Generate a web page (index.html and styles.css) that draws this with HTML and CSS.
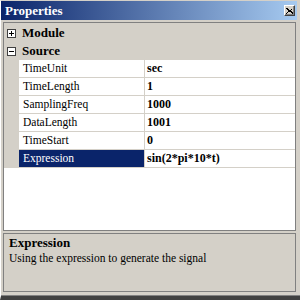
FILE: index.html
```html
<!DOCTYPE html>
<html>
<head>
<meta charset="utf-8">
<link rel="stylesheet" href="styles.css">
</head>
<body>
<div class="window">
  <div class="titlebar">
    <span class="title">Properties</span>
    <span class="close">
      <svg width="7" height="6" viewBox="0 0 7 6"><path d="M0.5 0.5 L6.5 5.5 M6.5 0.5 L0.5 5.5 M1.5 0.5 L7 5.5" stroke="#000" stroke-width="1" fill="none" shape-rendering="crispEdges"/></svg>
    </span>
  </div>
  <div class="grid">
    <div class="cat">
      <svg class="box" width="9" height="9" viewBox="0 0 9 9"><rect x="0.5" y="0.5" width="8" height="8" fill="#fff" stroke="#404040"/><path d="M2 4.5 H7 M4.5 2 V7" stroke="#000"/></svg>
      <span>Module</span>
    </div>
    <div class="cat">
      <svg class="box" width="9" height="9" viewBox="0 0 9 9"><rect x="0.5" y="0.5" width="8" height="8" fill="#fff" stroke="#404040"/><path d="M2 4.5 H7" stroke="#000"/></svg>
      <span>Source</span>
    </div>
    <div class="row"><div class="gut"></div><div class="name">TimeUnit</div><div class="val">sec</div></div>
    <div class="row"><div class="gut"></div><div class="name">TimeLength</div><div class="val">1</div></div>
    <div class="row"><div class="gut"></div><div class="name">SamplingFreq</div><div class="val">1000</div></div>
    <div class="row"><div class="gut"></div><div class="name">DataLength</div><div class="val">1001</div></div>
    <div class="row"><div class="gut"></div><div class="name">TimeStart</div><div class="val">0</div></div>
    <div class="row sel"><div class="gut"></div><div class="name">Expression</div><div class="val">sin(2*pi*10*t)</div></div>
  </div>
  <div class="desc">
    <div class="dtitle">Expression</div>
    <div class="dtext">Using the expression to generate the signal</div>
  </div>
</div>
</body>
</html>
```
FILE: styles.css
```css
html, body {
  margin: 0;
  padding: 0;
  background: #d4d0c8;
}
.window {
  width: 300px;
  height: 300px;
  box-sizing: border-box;
  background: #d4d0c8;
  border-top: 1px solid #d4d0c8;
  border-left: 1px solid #ffffff;
  border-bottom: 4px solid #404040;
  box-shadow: inset 0 -1px 0 #808080;
  display: flex;
  flex-direction: column;
  font-family: "Liberation Serif", "Times New Roman", serif;
  color: #000;
}
.titlebar {
  height: 19px;
  margin-right: 3px;
  background: linear-gradient(to right, #0a246a, #a6caf0);
  display: flex;
  align-items: center;
  justify-content: space-between;
  flex-shrink: 0;
}
.title {
  color: #fff;
  font-weight: bold;
  font-size: 13px;
  line-height: 19px;
  padding-left: 4px;
}
.close {
  width: 9px;
  height: 9px;
  margin-right: 2px;
  background: #d4d0c8;
  border-top: 1px solid #ffffff;
  border-left: 1px solid #ffffff;
  border-right: 1px solid #404040;
  border-bottom: 1px solid #404040;
  box-shadow: inset -1px -1px 0 #808080;
  display: flex;
  align-items: center;
  justify-content: center;
}
.close svg {
  display: block;
}
.grid {
  margin: 2px 4px 0 2px;
  height: 209px;
  box-sizing: border-box;
  border: 1px solid #808080;
  background: #ffffff;
  padding-top: 1px;
  box-shadow: inset 0 1px 0 #d4d0c8;
  flex-shrink: 0;
}
.cat {
  height: 18px;
  background: #d4d0c8;
  display: flex;
  align-items: center;
  gap: 6px;
  padding-left: 3px;
  font-weight: bold;
  font-size: 13px;
  line-height: 18px;
}
.box {
  display: block;
}
.row {
  display: grid;
  grid-template-columns: 15px 126px 1fr;
  height: 18px;
}
.gut {
  background: #d4d0c8;
}
.name {
  box-sizing: border-box;
  border-right: 1px solid #d4d0c8;
  border-bottom: 1px solid #d4d0c8;
  padding-left: 4px;
  font-size: 11.5px;
  line-height: 17px;
  white-space: nowrap;
}
.val {
  box-sizing: border-box;
  border-bottom: 1px solid #d4d0c8;
  padding-left: 2px;
  font-size: 12px;
  font-weight: bold;
  line-height: 17px;
  white-space: nowrap;
}
.sel .name {
  background: #0a246a;
  color: #ffffff;
}
.desc {
  margin: 2px 4px 0 2px;
  height: 59px;
  box-sizing: border-box;
  border: 1px solid #808080;
  padding: 1px 5px 0 5px;
  flex-shrink: 0;
}
.dtitle {
  font-weight: bold;
  font-size: 13px;
  line-height: 15px;
}
.dtext {
  margin-top: 2px;
  font-size: 11.5px;
  line-height: 13px;
}
```
